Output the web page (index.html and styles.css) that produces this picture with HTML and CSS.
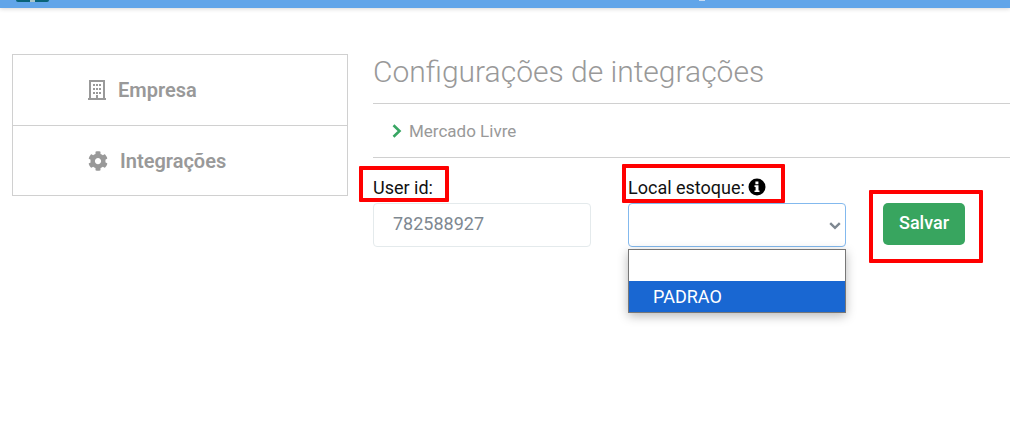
FILE: index.html
```html
<!DOCTYPE html>
<html lang="pt-BR">
<head>
<meta charset="utf-8">
<meta name="viewport" content="width=device-width, initial-scale=1">
<title>Configurações de integrações</title>
<link rel="stylesheet" href="styles.css">
</head>
<body>
<header class="topbar"><span class="topbar-logo"></span><span class="topbar-mark"></span></header>
<div class="layout">
  <nav class="sidebar">
    <a class="sidebar-link" href="#empresa">
      <svg class="icon-building" viewBox="0 0 18 20" aria-hidden="true"><path fill="currentColor" fill-rule="evenodd" d="M1 0h16v18h1v2H0v-2h1zM3 2v16h5v-3h2v3h5V2zM5 4h2v2H5zm3 0h2v2H8zm3 0h2v2h-2zM5 8h2v2H5zm3 0h2v2H8zm3 0h2v2h-2zM5 12h2v2H5zm3 0h2v2H8zm3 0h2v2h-2z"/></svg>
      <span>Empresa</span>
    </a>
    <a class="sidebar-link" href="#integracoes">
      <svg class="icon-gear" viewBox="0 0 512 512" aria-hidden="true"><path fill="currentColor" d="M487.4 315.7l-42.600-24.600c4.300-23.200 4.300-47 0-70.200l42.600-24.600c4.900-2.800 7.100-8.600 5.500-14-11.100-35.600-30-67.800-54.700-94.600-3.800-4.100-10-5.100-14.800-2.300L380.800 110c-17.900-15.400-38.500-27.300-60.800-35.100V25.800c0-5.600-3.900-10.500-9.400-11.700-36.700-8.200-74.300-7.800-109.200 0-5.500 1.200-9.400 6.100-9.400 11.700V75c-22.200 7.900-42.800 19.800-60.800 35.100L88.700 85.500c-4.900-2.800-11-1.900-14.800 2.300-24.700 26.700-43.600 58.900-54.700 94.600-1.700 5.400.6 11.200 5.500 14L67.300 221c-4.300 23.200-4.300 47 0 70.200l-42.600 24.600c-4.900 2.800-7.100 8.600-5.500 14 11.100 35.600 30 67.800 54.700 94.600 3.800 4.100 10 5.100 14.800 2.300l42.600-24.600c17.900 15.400 38.500 27.300 60.800 35.100v49.200c0 5.600 3.900 10.500 9.400 11.700 36.700 8.200 74.300 7.800 109.200 0 5.500-1.200 9.400-6.100 9.400-11.700v-49.200c22.200-7.900 42.800-19.800 60.800-35.100l42.600 24.600c4.900 2.800 11 1.900 14.800-2.300 24.700-26.700 43.600-58.900 54.700-94.600 1.500-5.500-.7-11.300-5.600-14.100zM256 336c-44.100 0-80-35.900-80-80s35.900-80 80-80 80 35.900 80 80-35.900 80-80 80z"/></svg>
      <span>Integrações</span>
    </a>
  </nav>
  <main class="content">
    <h1 class="title">Configurações de integrações</h1>
    <a class="section-link" href="#mercado-livre">
      <svg class="icon-chevron" viewBox="0 0 10 14" aria-hidden="true"><path d="M1.500 1.200L7.500 7l-6 5.800" fill="none" stroke="currentColor" stroke-width="2.600"/></svg>
      <span>Mercado Livre</span>
    </a>
    <form class="form">
      <div class="field">
        <label class="label marked marked-user" for="user-id">User id:</label>
        <input class="control" id="user-id" type="text" value="782588927">
      </div>
      <div class="field">
        <label class="label marked marked-stock" for="stock">Local estoque:
          <svg class="icon-info" viewBox="0 0 18 18" aria-hidden="true"><circle cx="9" cy="9" r="8.500"/><path fill="#fff" d="M7.400 3.400h3v2.800h-3zM6.500 7.200h4v5.200h1v1.700h-5v-1.700h1.100V9H6.500z"/></svg>
        </label>
        <div class="select-wrap">
          <select class="control control-open" id="stock"><option></option><option>PADRAO</option></select>
          <svg class="icon-arrow" viewBox="0 0 12 8" aria-hidden="true"><path d="M1.200 1.200L6 5.800l4.800-4.600" fill="none" stroke="currentColor" stroke-width="2.400"/></svg>
          <ul class="menu">
            <li class="menu-item"></li>
            <li class="menu-item menu-item-active">PADRAO</li>
          </ul>
        </div>
      </div>
      <div class="action marked marked-save"><button class="save" type="button">Salvar</button></div>
    </form>
  </main>
</div>
</body>
</html>
```
FILE: styles.css
```css
* { box-sizing: border-box; }

body {
  min-height: 100vh;
  margin: 0;
  background: #fff;
  color: #111;
  font-family: Roboto, "Liberation Sans", sans-serif;
  font-size: 18px;
}

.topbar {
  position: relative;
  height: 8px;
  background: #61a5e9;
  box-shadow: 0 1px 4px rgba(0, 0, 0, 0.16);
}

.topbar-logo {
  position: absolute;
  left: 16px;
  top: 0;
  width: 33px;
  height: 2px;
  border-radius: 0 0 2px 2px;
  background: linear-gradient(90deg, #086378 14px, #a9c5c8 14px 19px, #086378 19px);
}

.topbar-mark {
  position: absolute;
  left: 699px;
  top: 0;
  width: 6px;
  height: 1px;
  background: #c5dcf5;
}

.layout {
  display: flex;
  align-items: flex-start;
  gap: 25px;
  padding: 46px 0 0 12px;
}

.sidebar {
  flex: 0 0 336px;
  border: 1px solid #d0d0d0;
}

.sidebar-link {
  display: flex;
  align-items: center;
  gap: 12px;
  height: 70px;
  padding-left: 75px;
  color: #999;
  font-size: 20px;
  font-weight: 600;
  text-decoration: none;
}

.sidebar-link + .sidebar-link { border-top: 1px solid #d0d0d0; }

.icon-building { width: 18px; height: 20px; }

.icon-gear { width: 20px; height: 20px; }

.content {
  flex: 1;
  min-width: 0;
}

.title {
  margin: 0;
  padding-bottom: 13px;
  border-bottom: 1px solid #d0d0d0;
  color: #999;
  font-size: 30px;
  font-weight: 300;
  line-height: 36px;
}

.section-link {
  display: flex;
  align-items: center;
  gap: 7px;
  height: 54px;
  padding-left: 19px;
  border-bottom: 1px solid #d0d0d0;
  color: #999;
  font-size: 17px;
  font-weight: 400;
  text-decoration: none;
}

.icon-chevron { width: 10px; height: 14px; color: #38a663; }

.form {
  display: flex;
  align-items: flex-end;
  gap: 37px;
  padding-top: 17px;
}

.field {
  display: flex;
  flex-direction: column;
  align-items: flex-start;
  width: 218px;
}

.label {
  display: flex;
  align-items: center;
  gap: 3px;
  height: 28px;
  padding-bottom: 4px;
}

.control {
  display: block;
  width: 100%;
  height: 44px;
  padding: 0 19px 4px;
  border: 1px solid #e4eaec;
  border-radius: 4px;
  background: #fff;
  color: #7e8891;
  font: inherit;
  appearance: none;
}

.control-open { border-color: #83b9ee; }

.select-wrap {
  position: relative;
  width: 100%;
}

.icon-info { width: 18px; height: 18px; }

.icon-arrow {
  position: absolute;
  right: 5px;
  top: 19px;
  width: 12px;
  height: 8px;
  color: #7e8891;
  pointer-events: none;
}

.menu {
  position: absolute;
  top: 46px;
  left: 0;
  right: 0;
  margin: 0;
  padding: 0;
  border: 1px solid #777;
  background: #fff;
  box-shadow: 0 3px 10px rgba(0, 0, 0, 0.28);
  list-style: none;
}

.menu-item {
  height: 31px;
  padding-left: 24px;
  line-height: 31px;
}

.menu-item-active { background: #1967d2; color: #fff; }

.action { padding-bottom: 2px; }

.save {
  display: block;
  height: 42px;
  padding: 0 16px 3px;
  border: 0;
  border-radius: 5px;
  background: #38a55f;
  color: #fff;
  font: inherit;
  font-weight: 500;
}

/* Highlight frames around the fields to fill in */
.marked { position: relative; }

.marked::after {
  content: "";
  position: absolute;
  z-index: 1;
  border: 4px solid #f00;
  border-radius: 1px;
  pointer-events: none;
}

.marked-user::after { inset: -9px -16px 1px -14px; }

.marked-stock::after { inset: -11px -19px 0 -6px; }

.marked-save::after { inset: -13px -18px -16px -14px; }
```
